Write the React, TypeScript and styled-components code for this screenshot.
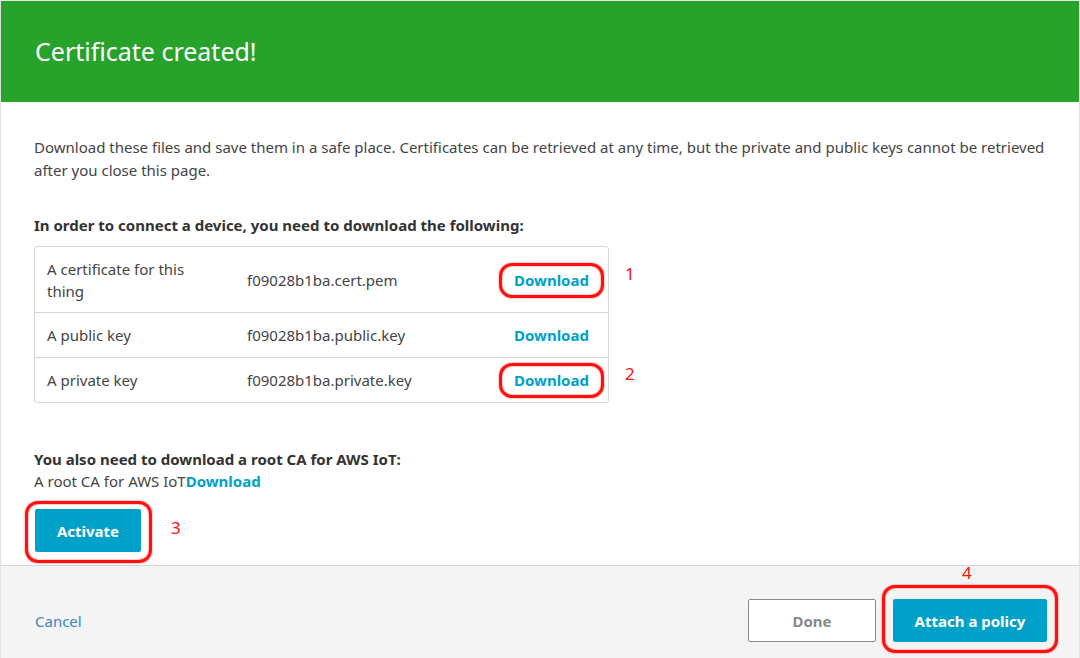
import React from 'react';
import styled, { createGlobalStyle } from 'styled-components';

const colors = {
  green: '#27a22b',
  link: '#00a1c9',
  text: '#444444',
  heading: '#333333',
  border: '#d5d5d5',
  footerBg: '#f4f4f4',
  cancel: '#3b87bf',
  annotate: '#ff1010',
};

const GlobalStyle = createGlobalStyle`
  html, body {
    margin: 0;
    padding: 0;
    background: #ffffff;
  }
  body {
    font-family: "Noto Sans", "Open Sans", Arial, sans-serif;
    color: ${colors.text};
    -webkit-font-smoothing: antialiased;
  }
`;

const Page = styled.div`
  width: 1080px;
  height: 658px;
  box-sizing: border-box;
  border-left: 1px solid #e2e2e2;
  border-right: 1px solid #e2e2e2;
  display: flex;
  flex-direction: column;
  overflow: hidden;
`;

const Banner = styled.header`
  background: ${colors.green};
  height: 102px;
  margin: 0 -1px;
  padding: 0 35px;
  display: flex;
  align-items: center;
  border-top: 1px solid #e8e8e8;
  box-sizing: border-box;
`;

const Title = styled.h1`
  margin: 0;
  font-size: 25px;
  font-weight: 400;
  color: #ffffff;
  padding-bottom: 2px;
`;

const Body = styled.main`
  flex: 1;
  padding: 34px 33px 0 33px;
  display: flex;
  flex-direction: column;
`;

const Paragraph = styled.p`
  margin: 0;
  font-size: 15px;
  line-height: 23px;
  color: ${colors.text};
`;

const Heading = styled.p<{ $top: number }>`
  margin: ${(p) => p.$top}px 0 0;
  font-size: 15px;
  line-height: 22px;
  font-weight: 700;
  color: ${colors.heading};
`;

const Table = styled.div`
  margin-top: 10px;
  width: 575px;
  border: 1px solid ${colors.border};
  border-radius: 3px;
  box-sizing: border-box;
`;

const Row = styled.div<{ $tall?: boolean }>`
  display: grid;
  grid-template-columns: 200px 267px 1fr;
  align-items: center;
  min-height: ${(p) => (p.$tall ? 65 : 44)}px;
  & + & {
    border-top: 1px solid ${colors.border};
  }
`;

const Cell = styled.div`
  padding: 0 12px;
  font-size: 15px;
  line-height: 22px;
  color: ${colors.text};
`;

const Label = styled.span`
  display: block;
  max-width: 165px;
`;

const LinkText = styled.a`
  position: relative;
  font-size: 15px;
  line-height: 22px;
  font-weight: 700;
  color: ${colors.link};
  text-decoration: none;
  cursor: pointer;
`;

const Line = styled.div`
  font-size: 15px;
  line-height: 22px;
  color: ${colors.text};
`;

const PrimaryButton = styled.button<{ $width: number }>`
  position: relative;
  width: ${(p) => p.$width}px;
  height: 43px;
  border: none;
  border-radius: 2px;
  background: ${colors.link};
  color: #ffffff;
  font-family: inherit;
  font-size: 15px;
  font-weight: 700;
  cursor: pointer;
`;

const SecondaryButton = styled.button`
  width: 128px;
  height: 43px;
  border: 1px solid #8a8a8a;
  border-radius: 2px;
  background: #ffffff;
  color: #888888;
  font-family: inherit;
  font-size: 15px;
  font-weight: 700;
`;

const ActivateWrap = styled.div`
  margin-top: 17px;
  margin-left: 1px;
`;

const Footer = styled.footer`
  height: 93px;
  box-sizing: border-box;
  margin-top: 12px;
  border-top: 1px solid ${colors.border};
  background: ${colors.footerBg};
  padding: 33px 32px 16px 34px;
  display: flex;
  align-items: center;
  justify-content: space-between;
`;

const Cancel = styled.a`
  font-size: 15px;
  color: ${colors.cancel};
  text-decoration: none;
`;

const FooterActions = styled.div`
  display: flex;
  gap: 17px;
`;

/* hand-drawn red markup over the screenshot */
const Ring = styled.span<{ $t: number; $r: number; $b: number; $l: number }>`
  position: absolute;
  top: ${(p) => -p.$t}px;
  right: ${(p) => -p.$r}px;
  bottom: ${(p) => -p.$b}px;
  left: ${(p) => -p.$l}px;
  border: 3px solid ${colors.annotate};
  border-radius: 13px;
  box-shadow: 0 0 1.5px ${colors.annotate}, inset 0 0 1.5px ${colors.annotate};
  pointer-events: none;
`;

const Mark = styled.span<{ $x: number; $y: number }>`
  position: absolute;
  left: ${(p) => p.$x}px;
  top: ${(p) => p.$y}px;
  font-size: 17px;
  font-weight: 400;
  line-height: 20px;
  color: ${colors.annotate};
  pointer-events: none;
`;

const files = [
  { label: 'A certificate for this thing', file: 'f09028b1ba.cert.pem', mark: '1' },
  { label: 'A public key', file: 'f09028b1ba.public.key' },
  { label: 'A private key', file: 'f09028b1ba.private.key', mark: '2' },
];

export default function App() {
  return (
    <>
      <GlobalStyle />
      <Page>
        <Banner>
          <Title>Certificate created!</Title>
        </Banner>
        <Body>
          <Paragraph>
            Download these files and save them in a safe place. Certificates can be retrieved at any
            time, but the private and public keys cannot be retrieved after you close this page.
          </Paragraph>
          <Heading $top={32}>In order to connect a device, you need to download the following:</Heading>
          <Table>
            {files.map((f, i) => (
              <Row key={f.file} $tall={i === 0}>
                <Cell>
                  <Label>{f.label}</Label>
                </Cell>
                <Cell>{f.file}</Cell>
                <Cell>
                  <LinkText>
                    Download
                    {f.mark && (
                      <>
                        <Ring $t={7} $r={15} $b={8} $l={15} />
                        <Mark $x={111} $y={-6}>{f.mark}</Mark>
                      </>
                    )}
                  </LinkText>
                </Cell>
              </Row>
            ))}
          </Table>
          <Heading $top={45}>You also need to download a root CA for AWS IoT:</Heading>
          <Line>
            A root CA for AWS IoT<LinkText>Download</LinkText>
          </Line>
          <ActivateWrap>
            <PrimaryButton $width={106}>
              Activate
              <Ring $t={8} $r={11} $b={11} $l={10} />
              <Mark $x={136} $y={9}>3</Mark>
            </PrimaryButton>
          </ActivateWrap>
        </Body>
        <Footer>
          <Cancel>Cancel</Cancel>
          <FooterActions>
            <SecondaryButton>Done</SecondaryButton>
            <PrimaryButton $width={154}>
              Attach a policy
              <Ring $t={14} $r={11} $b={11} $l={11} />
              <Mark $x={69} $y={-36}>4</Mark>
            </PrimaryButton>
          </FooterActions>
        </Footer>
      </Page>
    </>
  );
}
